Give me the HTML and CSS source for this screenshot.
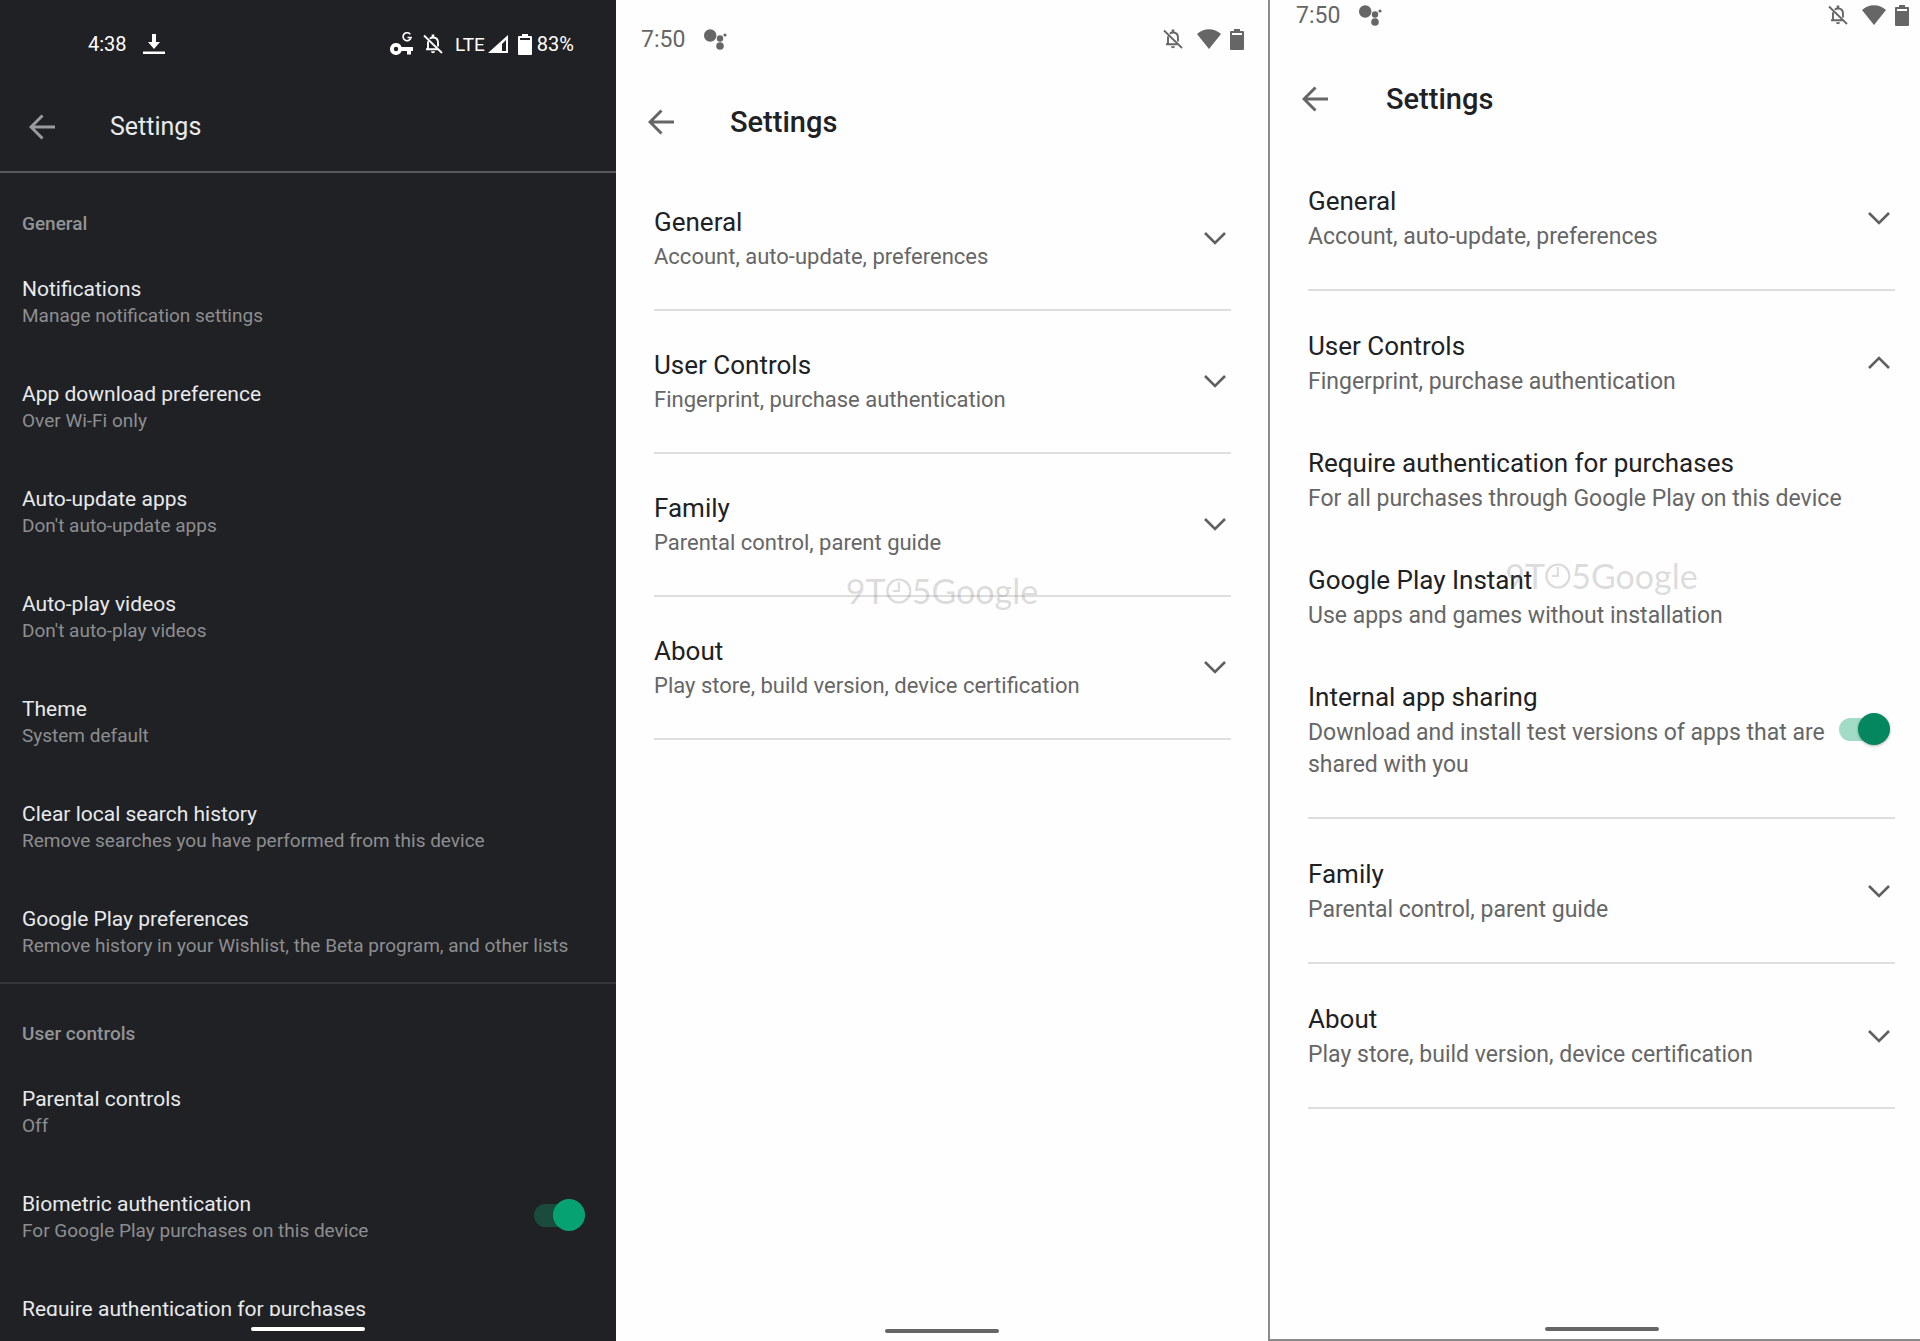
FILE: index.html
```html
<!DOCTYPE html>
<html lang="en">
<head>
  <meta charset="UTF-8" />
  <meta name="viewport" content="width=device-width, initial-scale=1.0"/>
  <title>Play Store Settings</title>
  <link rel="stylesheet" href="styles.css">
</head>

<body>

  <!-- Shared icons -->
  <svg class="sprite" aria-hidden="true">
    <symbol id="arrow" viewBox="0 0 26 26">
      <path d="M26 13H3M13.500 1.500L2 13l11.500 11.500" fill="none" stroke="currentColor" stroke-width="3"/>
    </symbol>
    <symbol id="chevron" viewBox="0 0 22 14">
      <path d="M1 2l10 10L21 2" fill="none" stroke="currentColor" stroke-width="2.600"/>
    </symbol>
    <symbol id="bell-off" viewBox="0 0 20 20">
      <path d="M1 1.500L19 19" fill="none" stroke="currentColor" stroke-width="1.800"/>
      <path d="M5 7.200V15M3 15.300h11.500M6.800 4.600C7.600 3.900 8.700 3.500 10 3.500c3.300 0 5 2.300 5 5.200v3.800" fill="none" stroke="currentColor" stroke-width="1.900"/>
      <path d="M8.700.500h2.600V4H8.700zM8 17.300h4a2 2 0 0 1-4 0z" fill="currentColor"/>
    </symbol>
    <symbol id="battery" viewBox="0 0 14 21">
      <path fill-rule="evenodd" d="M4 0h6v2h3a1 1 0 0 1 1 1v17a1 1 0 0 1-1 1H1a1 1 0 0 1-1-1V3a1 1 0 0 1 1-1h3zM2 4v2h10V4z" fill="currentColor"/>
    </symbol>
    <symbol id="wifi" viewBox="0 0 24 20">
      <path d="M12 20L0 5C3.300 2 7.500.300 12 .300S20.700 2 24 5z" fill="currentColor"/>
    </symbol>
    <symbol id="assistant" viewBox="0 0 24 21">
      <g fill="currentColor">
        <circle cx="6.200" cy="6.500" r="6.200"/>
        <circle cx="16" cy="9.500" r="3.200"/>
        <circle cx="16" cy="17" r="3.800"/>
        <circle cx="21" cy="6" r="1.600"/>
      </g>
    </symbol>
    <symbol id="clock" viewBox="0 0 26 26">
      <circle cx="13" cy="13" r="11.500" fill="none" stroke="currentColor" stroke-width="2.200"/>
      <path d="M13 4v9H7" fill="none" stroke="currentColor" stroke-width="2"/>
    </symbol>
  </svg>

  <main class="screens">

    <!-- Old settings, dark theme -->
    <section class="phone dark">
      <div class="status">
        <span>4:38</span>
        <svg class="download" viewBox="0 0 22 20" width="22" height="20"><path d="M0 17.500h22V20H0zM9 0h4v8h4l-6 7-6-7h4z" fill="currentColor"/></svg>
        <span class="spacer"></span>
        <svg class="key" viewBox="0 0 24 24" width="24" height="24">
          <path fill-rule="evenodd" d="M6 11a6 6 0 0 1 5.600 4H23v4h-2v3.500h-4V19h-5.400A6 6 0 1 1 6 11zm0 3.800a2.200 2.200 0 1 0 0 4.400 2.200 2.200 0 0 0 0-4.400z" fill="currentColor"/>
          <path d="M20.300 2.300A4 4 0 1 0 21 5.500h-3.500" fill="none" stroke="currentColor" stroke-width="1.600"/>
        </svg>
        <svg class="bell" width="20" height="20"><use href="#bell-off"/></svg>
        <span class="network">LTE</span>
        <svg class="signal" viewBox="0 0 20 18" width="20" height="18"><path fill-rule="evenodd" d="M20 0v18H0zM18 5l-4 4V16h4z" fill="currentColor"/></svg>
        <svg class="battery" width="14" height="21"><use href="#battery"/></svg>
        <span>83%</span>
      </div>

      <header class="toolbar">
        <button class="back" type="button" aria-label="Back"><svg width="26" height="26"><use href="#arrow"/></svg></button>
        <h1>Settings</h1>
      </header>

      <div class="list">
        <h2>General</h2>
        <ul>
          <li><a href="#"><strong>Notifications</strong><span>Manage notification settings</span></a></li>
          <li><a href="#"><strong>App download preference</strong><span>Over Wi-Fi only</span></a></li>
          <li><a href="#"><strong>Auto-update apps</strong><span>Don't auto-update apps</span></a></li>
          <li><a href="#"><strong>Auto-play videos</strong><span>Don't auto-play videos</span></a></li>
          <li><a href="#"><strong>Theme</strong><span>System default</span></a></li>
          <li><a href="#"><strong>Clear local search history</strong><span>Remove searches you have performed from this device</span></a></li>
          <li><a href="#"><strong>Google Play preferences</strong><span>Remove history in your Wishlist, the Beta program, and other lists</span></a></li>
        </ul>
        <h2 class="divided">User controls</h2>
        <ul>
          <li><a href="#"><strong>Parental controls</strong><span>Off</span></a></li>
          <li class="switch-row">
            <label for="biometric"><strong>Biometric authentication</strong><span>For Google Play purchases on this device</span></label>
            <input class="switch" type="checkbox" id="biometric" checked>
          </li>
          <li><a href="#"><strong>Require authentication for purchases</strong></a></li>
        </ul>
      </div>
      <div class="home"></div>
    </section>

    <!-- New settings, everything collapsed -->
    <section class="phone light">
      <div class="status">
        <span>7:50</span>
        <svg class="assistant" width="24" height="21"><use href="#assistant"/></svg>
        <span class="spacer"></span>
        <svg class="bell" width="20" height="20"><use href="#bell-off"/></svg>
        <svg class="wifi" width="24" height="20"><use href="#wifi"/></svg>
        <svg class="battery" width="14" height="21"><use href="#battery"/></svg>
      </div>

      <header class="toolbar">
        <button class="back" type="button" aria-label="Back"><svg width="26" height="26"><use href="#arrow"/></svg></button>
        <h1>Settings</h1>
      </header>

      <div class="groups">
        <div class="group">
          <button class="row" type="button" aria-expanded="false">
            <span class="text"><strong>General</strong><span>Account, auto-update, preferences</span></span>
            <svg class="chevron" width="22" height="14"><use href="#chevron"/></svg>
          </button>
        </div>
        <div class="group">
          <button class="row" type="button" aria-expanded="false">
            <span class="text"><strong>User Controls</strong><span>Fingerprint, purchase authentication</span></span>
            <svg class="chevron" width="22" height="14"><use href="#chevron"/></svg>
          </button>
        </div>
        <div class="group">
          <button class="row" type="button" aria-expanded="false">
            <span class="text"><strong>Family</strong><span>Parental control, parent guide</span></span>
            <svg class="chevron" width="22" height="14"><use href="#chevron"/></svg>
          </button>
        </div>
        <div class="group">
          <button class="row" type="button" aria-expanded="false">
            <span class="text"><strong>About</strong><span>Play store, build version, device certification</span></span>
            <svg class="chevron" width="22" height="14"><use href="#chevron"/></svg>
          </button>
        </div>
      </div>
      <div class="watermark">9T<svg width="26" height="26"><use href="#clock"/></svg>5Google</div>
      <div class="home"></div>
    </section>

    <!-- New settings, User Controls open -->
    <section class="phone light expanded">
      <div class="status">
        <span>7:50</span>
        <svg class="assistant" width="24" height="21"><use href="#assistant"/></svg>
        <span class="spacer"></span>
        <svg class="bell" width="20" height="20"><use href="#bell-off"/></svg>
        <svg class="wifi" width="24" height="20"><use href="#wifi"/></svg>
        <svg class="battery" width="14" height="21"><use href="#battery"/></svg>
      </div>

      <header class="toolbar">
        <button class="back" type="button" aria-label="Back"><svg width="26" height="26"><use href="#arrow"/></svg></button>
        <h1>Settings</h1>
      </header>

      <div class="groups">
        <div class="group">
          <button class="row" type="button" aria-expanded="false">
            <span class="text"><strong>General</strong><span>Account, auto-update, preferences</span></span>
            <svg class="chevron" width="22" height="14"><use href="#chevron"/></svg>
          </button>
        </div>
        <div class="group">
          <button class="row" type="button" aria-expanded="true">
            <span class="text"><strong>User Controls</strong><span>Fingerprint, purchase authentication</span></span>
            <svg class="chevron" width="22" height="14"><use href="#chevron"/></svg>
          </button>
          <a class="row" href="#"><span class="text"><strong>Require authentication for purchases</strong><span>For all purchases through Google Play on this device</span></span></a>
          <a class="row" href="#"><span class="text"><strong>Google Play Instant</strong><span>Use apps and games without installation</span></span></a>
          <div class="row">
            <label class="text" for="sharing"><strong>Internal app sharing</strong><span>Download and install test versions of apps that are shared with you</span></label>
            <input class="switch" type="checkbox" id="sharing" checked>
          </div>
        </div>
        <div class="group">
          <button class="row" type="button" aria-expanded="false">
            <span class="text"><strong>Family</strong><span>Parental control, parent guide</span></span>
            <svg class="chevron" width="22" height="14"><use href="#chevron"/></svg>
          </button>
        </div>
        <div class="group">
          <button class="row" type="button" aria-expanded="false">
            <span class="text"><strong>About</strong><span>Play store, build version, device certification</span></span>
            <svg class="chevron" width="22" height="14"><use href="#chevron"/></svg>
          </button>
        </div>
      </div>
      <div class="watermark">9T<svg width="26" height="26"><use href="#clock"/></svg>5Google</div>
      <div class="home"></div>
    </section>

  </main>

  <script>
    document.querySelectorAll("button.row").forEach(function (row) {
      row.addEventListener("click", function () {
        const open = row.getAttribute("aria-expanded") === "true";
        row.setAttribute("aria-expanded", String(!open));
      });
    });
  </script>

</body>
</html>
```
FILE: styles.css
```css
* {
  box-sizing: border-box;
}

body {
  margin: 0;
  font-family: Roboto, "Liberation Sans", sans-serif;
  background-color: #fefefe;
}

h1, h2, ul {
  margin: 0;
  padding: 0;
}

ul {
  list-style: none;
}

a {
  color: inherit;
  text-decoration: none;
}

button {
  border: none;
  padding: 0;
  background: none;
  color: inherit;
  font: inherit;
  text-align: left;
  cursor: pointer;
}

strong {
  font-weight: 400;
}

svg {
  display: block;
  flex-shrink: 0;
}

.sprite {
  display: none;
}

.screens {
  display: grid;
  grid-template-columns: 616fr 654fr 650fr;
}

.phone {
  position: relative;
  display: flex;
  flex-direction: column;
  height: 100vh;
  min-width: 0;
  overflow: hidden;
}

/* Status bar */
.status {
  display: flex;
  align-items: center;
}

.spacer {
  flex: 1;
}

/* Toolbar */
.toolbar {
  display: flex;
  align-items: center;
}

.toolbar h1 {
  font-weight: 500;
}

/* Home indicator */
.home {
  position: absolute;
  bottom: 10px;
  left: 50%;
  width: 114px;
  height: 4px;
  border-radius: 2px;
  transform: translateX(-50%);
  background-color: #666;
}

/* Switch */
.switch {
  appearance: none;
  position: relative;
  flex-shrink: 0;
  width: 51px;
  height: 23px;
  margin: 0;
  border-radius: 12px;
  background-color: #a3dcc6;
  cursor: pointer;
}

.switch::before {
  content: "";
  position: absolute;
  top: -5px;
  left: 0;
  width: 32px;
  height: 32px;
  border-radius: 50%;
  background-color: #04875f;
  box-shadow: 0 1px 3px rgba(0, 0, 0, 0.3);
}

.switch:checked::before {
  left: auto;
  right: 0;
}

/* Dark screen */
.dark {
  background-color: #202124;
  color: #e8eaed;
  padding-bottom: 25px;
}

.dark .status {
  height: 88px;
  padding: 0 42px 0 88px;
  color: #fff;
  font-size: 20px;
}

.dark .download {
  margin-left: 16px;
}

.dark .bell {
  margin-left: 9px;
}

.dark .network {
  margin-left: 12px;
  font-size: 19px;
}

.dark .signal {
  margin-left: 3px;
}

.dark .battery {
  margin: 0 5px 0 10px;
}

.dark .toolbar {
  height: 85px;
  padding: 0 29px 6px;
  border-bottom: 2px solid #58595c;
}

.dark .back {
  color: #9a9b9e;
}

.dark h1 {
  margin-left: 55px;
  font-size: 25px;
  font-weight: 400;
}

.list {
  flex: 1;
  min-height: 0;
  overflow: hidden;
  padding-top: 39px;
}

.list h2 {
  padding: 0 22px;
  color: #929396;
  font-size: 19px;
  font-weight: 500;
  line-height: 24px;
}

.list ul {
  padding: 14px 0 0;
}

.list li {
  padding: 25px 22px 26px;
}

.list ul + h2.divided {
  margin-top: -3px;
  padding-top: 38px;
  border-top: 2px solid #35363a;
}

.list strong,
.list span {
  display: block;
}

.list strong {
  font-size: 21px;
  line-height: 28px;
}

.list span {
  color: #8d8e91;
  font-size: 19px;
  line-height: 26px;
}

.switch-row {
  display: flex;
  align-items: center;
  justify-content: space-between;
}

.dark .switch {
  margin: 0 9px 4px 0;
  background-color: #1b4b3c;
}

.dark .switch::before {
  background-color: #07a272;
  box-shadow: none;
}

.dark .home {
  background-color: #fff;
}

/* Light screens */
.light {
  background-color: #fefefe;
  color: #202124;
  border-right: 2px solid #8a8a8a;
}

.light .status {
  height: 78px;
  padding: 0 24px 0 25px;
  color: #666;
  font-size: 23px;
}

.light .assistant {
  margin-left: 19px;
}

.light .wifi {
  margin: 0 9px 0 14px;
}

.light .toolbar {
  height: 88px;
  padding: 0 32px;
}

.light .back {
  color: #666;
}

.light h1 {
  margin-left: 56px;
  font-size: 29px;
}

.groups {
  padding: 2px 37px 0 38px;
}

.group {
  padding: 35px 0 36px;
  border-bottom: 2px solid #dedede;
}

.row {
  display: flex;
  align-items: center;
  justify-content: space-between;
  width: 100%;
}

.row + .row {
  margin-top: 46px;
}

.text strong,
.text span {
  display: block;
}

.text strong {
  font-size: 26px;
  line-height: 38px;
}

.text span {
  color: #666;
  font-size: 22px;
  line-height: 32px;
}

.chevron {
  margin-right: 5px;
  color: #5f5f5f;
}

.row[aria-expanded="true"] .chevron {
  transform: rotate(180deg);
}

.row .switch {
  margin-right: 5px;
}

.light .home {
  bottom: 8px;
}

/* Expanded screen */
.expanded {
  border-right: none;
  border-bottom: 2px solid #8a8a8a;
}

.expanded .status {
  height: 30px;
  padding: 0 11px 0 26px;
}

.expanded .toolbar {
  height: 138px;
}

.expanded h1 {
  margin-left: 58px;
}

.expanded .groups {
  padding: 0 25px 0 38px;
}

.expanded .group {
  padding: 36px 0;
}

.expanded .group:first-child {
  padding-top: 14px;
}

.expanded .text strong {
  line-height: 39px;
}

.expanded .text span {
  font-size: 23px;
}

/* The open screen sits a little to the right of its column */
.expanded .home,
.expanded .watermark {
  left: 51%;
}

/* Watermark */
.watermark {
  position: absolute;
  top: 571px;
  left: 50%;
  display: flex;
  align-items: center;
  transform: translateX(-50%);
  color: rgba(120, 120, 120, 0.26);
  font-family: Lato, sans-serif;
  font-size: 34px;
  font-weight: 400;
  line-height: 40px;
  pointer-events: none;
}

.expanded .watermark {
  top: 556px;
}
```
